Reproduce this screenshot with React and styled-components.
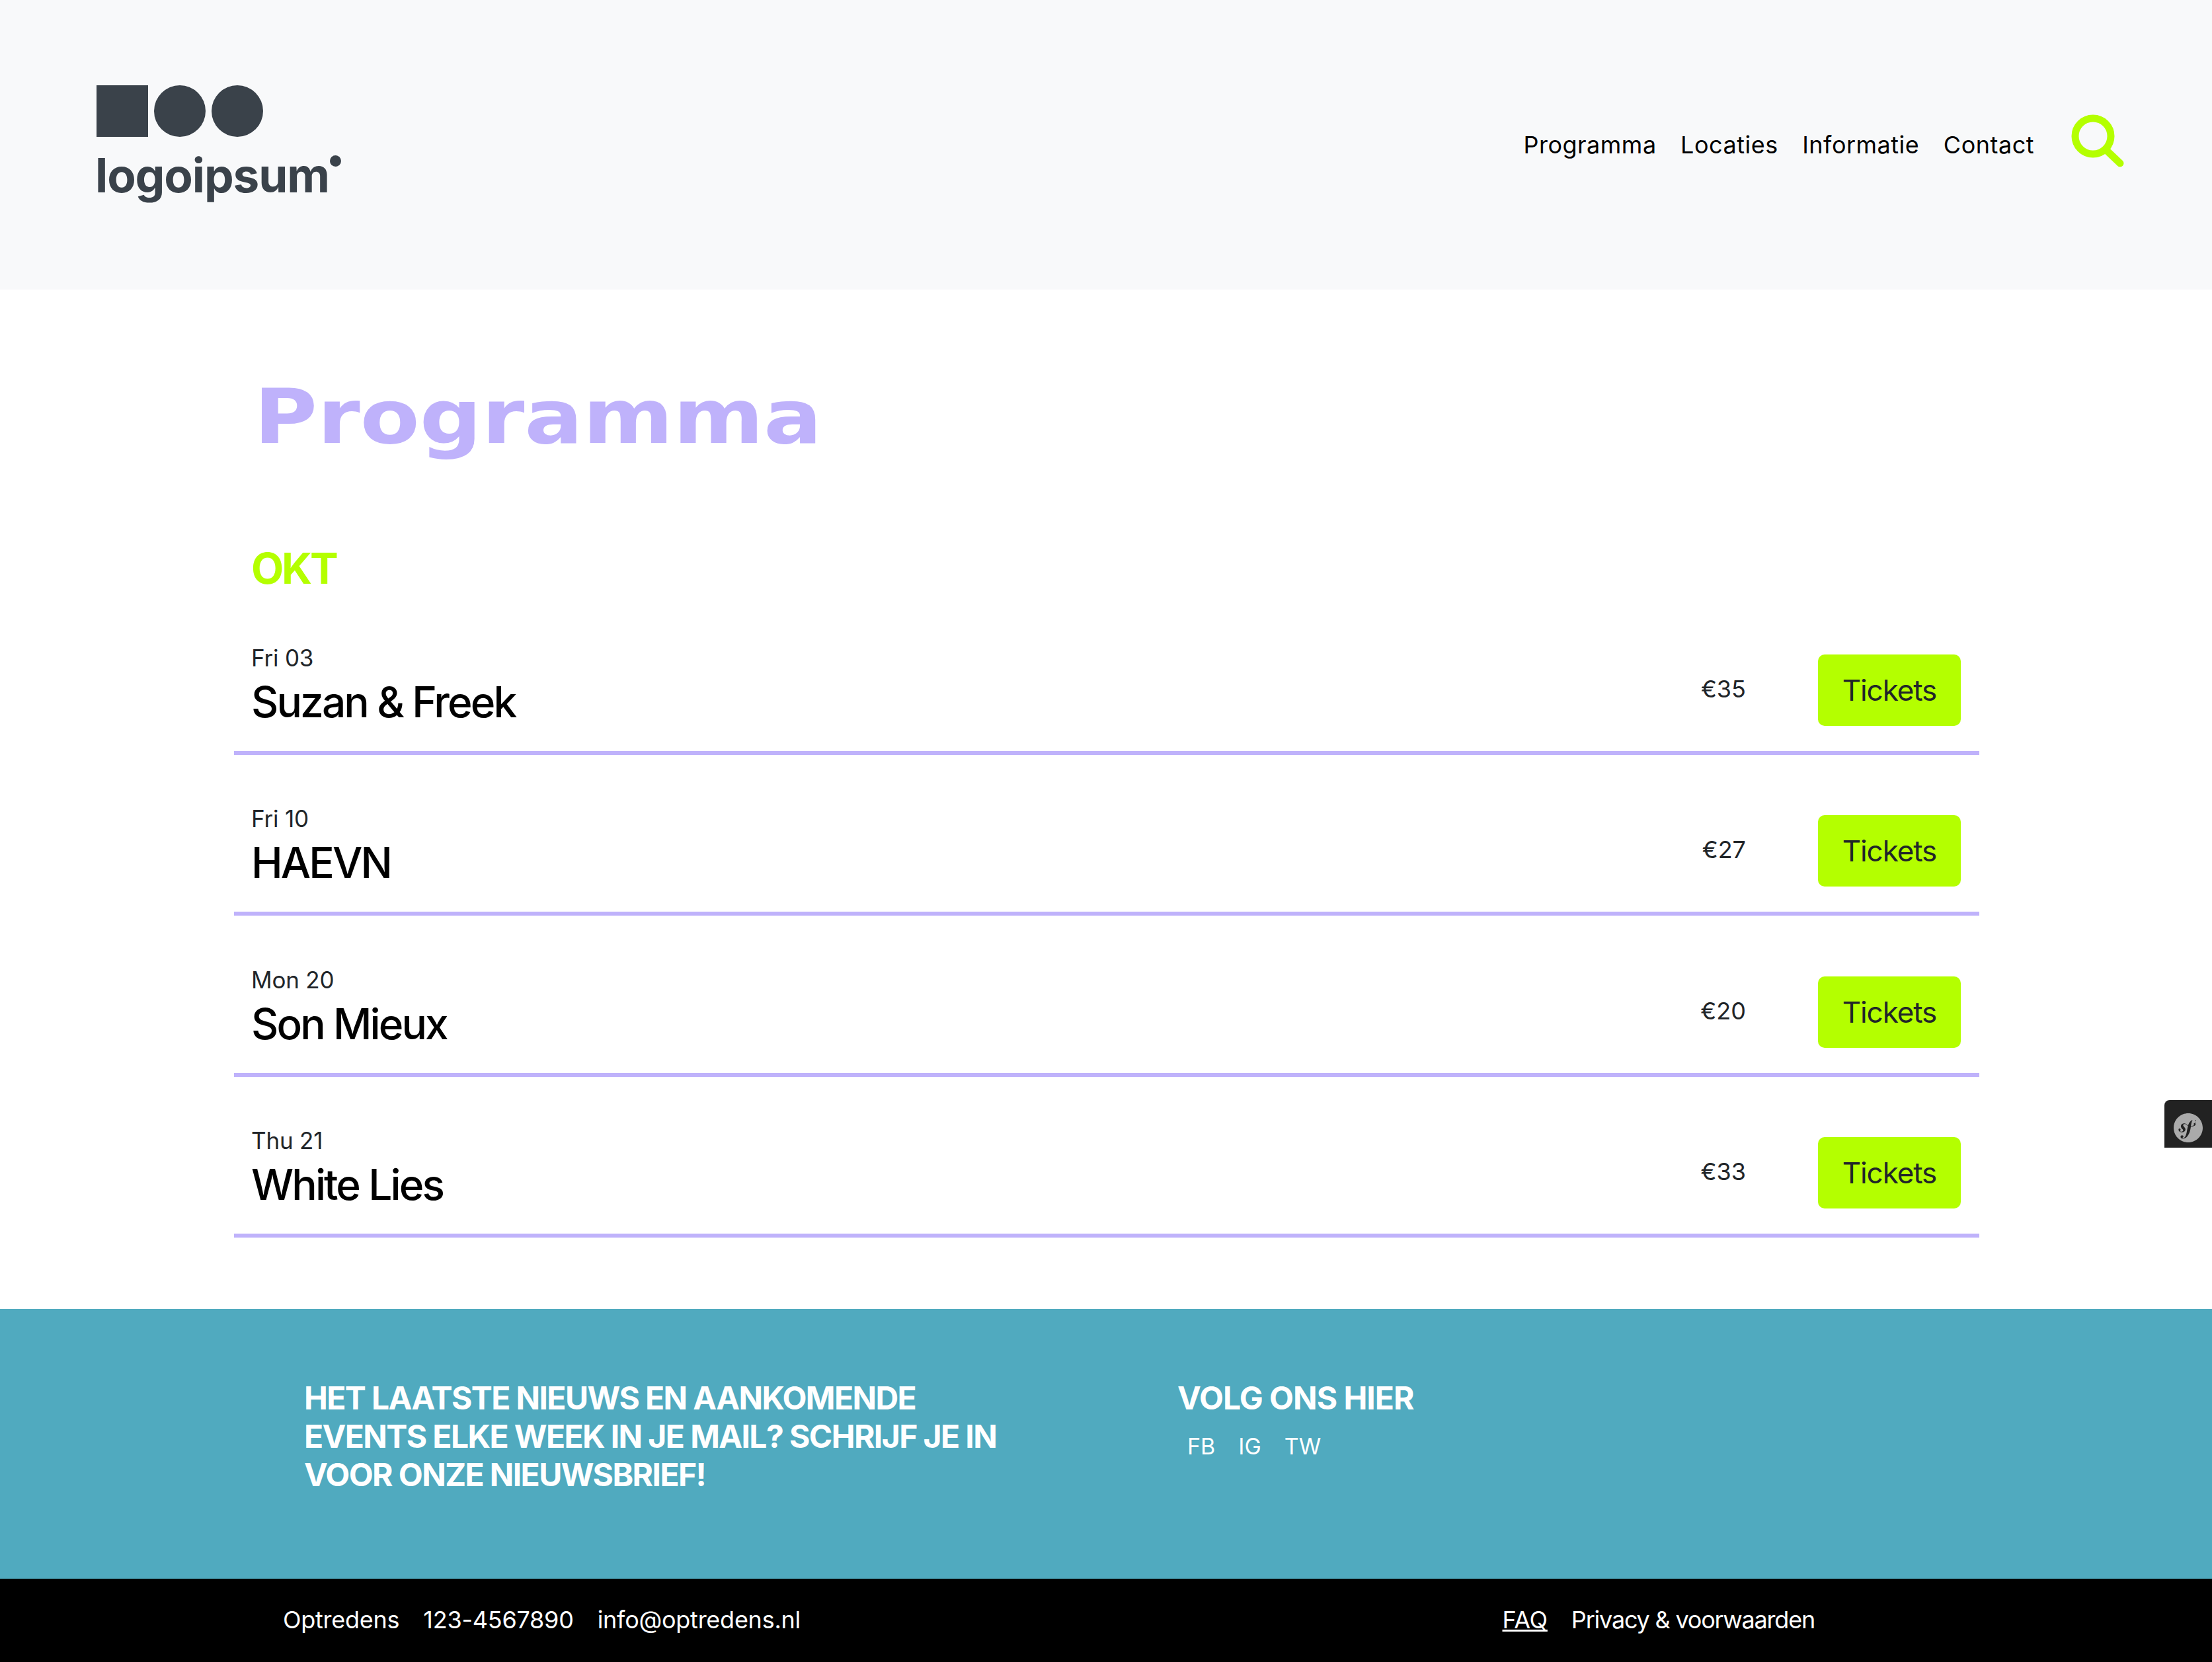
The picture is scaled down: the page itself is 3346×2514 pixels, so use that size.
import styled, { createGlobalStyle } from 'styled-components'

const GlobalStyle = createGlobalStyle`
  html, body {
    margin: 0;
    padding: 0;
    background: #fff;
    font-family: Inter, "Liberation Sans", sans-serif;
    color: #000;
  }
  * { box-sizing: border-box; }
`

const Page = styled.div`
  position: relative;
  width: 3346px;
  height: 2514px;
  overflow: hidden;
`
const Header = styled.header`
  height: 438px;
  background: #f8f9fa;
  padding: 129px 133px 0 146px;
  display: flex;
  justify-content: space-between;
  align-items: flex-start;
`
const Logo = styled.div`
  display: flex;
  flex-direction: column;
  color: #3a424a;
`
const LogoShapes = styled.svg`
  display: block;
  width: 252px;
  height: 78px;
`
const LogoWord = styled.div`
  display: flex;
  align-items: flex-start;
  margin: 20px 0 0 -2px;
  font-size: 71px;
  font-weight: 700;
  line-height: 76px;
  letter-spacing: -1.1px;
`
const LogoDot = styled.span`
  width: 17px;
  height: 17px;
  margin-top: 8px;
  margin-left: 1px;
  border-radius: 50%;
  background: #3a424a;
`
const Nav = styled.nav`
  display: flex;
  align-items: center;
  margin-top: 56px;
`
const NavLink = styled.a`
  font-size: 36px;
  line-height: 44px;
  letter-spacing: 0.5px;
  margin-right: 36.5px;
  color: #000;
`
const SearchIcon = styled.svg`
  width: 80px;
  height: 80px;
  margin-left: 19.5px;
  margin-top: -12px;
  display: block;
`
const Main = styled.main`
  height: 1542px;
  padding: 128px 352px 0 354px;
`
const Title = styled.h1`
  margin: 0 0 0 30px;
  font-family: "DejaVu Sans", sans-serif;
  font-weight: 700;
  font-size: 114px;
  line-height: 130px;
  transform: scaleX(1.15);
  transform-origin: left center;
  color: #bfb2fb;
`
const Month = styled.h2`
  margin: 126px 0 0 26px;
  font-size: 64px;
  line-height: 76px;
  font-weight: 700;
  letter-spacing: -3.2px;
  color: #b4ff00;
`
const Row = styled.div`
  height: 243.6px;
  padding: 0 28px 38px 26px;
  border-bottom: 6px solid #bfb2fb;
  display: flex;
  align-items: flex-end;
`
const RowText = styled.div`
  flex: 1;
  display: flex;
  flex-direction: column;
`
const RowDate = styled.div`
  font-size: 35px;
  line-height: 42px;
  letter-spacing: -0.2px;
  color: #212529;
`
const RowName = styled.div`
  font-size: 64px;
  line-height: 76px;
  font-weight: 500;
  letter-spacing: -2.9px;
  margin-top: 8px;
  margin-bottom: -2px;
`
const Price = styled.div`
  font-size: 36px;
  line-height: 44px;
  color: #212529;
  margin-right: 109px;
  margin-bottom: 34px;
`
const TicketButton = styled.a`
  width: 216px;
  height: 108px;
  border-radius: 10px;
  background: #b4ff00;
  color: #212529;
  font-size: 44px;
  letter-spacing: -1.1px;
  display: flex;
  align-items: center;
  justify-content: center;
`
const Newsletter = styled.section`
  height: 408px;
  background: #50aabf;
  padding: 106px 0 0 460px;
  display: flex;
  color: #fff;
`
const NewsText = styled.div`
  width: 1321px;
  font-size: 48px;
  line-height: 58px;
  font-weight: 700;
  letter-spacing: -1.6px;
`
const Follow = styled.div`
  display: flex;
  flex-direction: column;
`
const FollowTitle = styled.div`
  font-size: 48px;
  line-height: 58px;
  font-weight: 700;
  letter-spacing: -1px;
`
const SocialRow = styled.div`
  display: flex;
  gap: 35px;
  margin: 22px 0 0 15px;
  font-size: 34px;
  line-height: 44px;
`
const BottomBar = styled.footer`
  height: 126px;
  background: #000;
  color: #fff;
  padding: 0 601px 0 428px;
  display: flex;
  justify-content: space-between;
  align-items: center;
  font-size: 36px;
`
const BottomGroup = styled.div`
  display: flex;
  gap: 36px;
  margin-top: -2px;
`
const BottomLink = styled.a`
  color: #fff;
  letter-spacing: ${({ $tight }) => ($tight ? '-1.2px' : '-0.25px')};
  text-decoration: ${({ $underline }) => ($underline ? 'underline' : 'none')};
`
const DebugBadge = styled.div`
  position: absolute;
  right: 0;
  top: 1664px;
  width: 72px;
  height: 72px;
  background: #222;
  border-top-left-radius: 8px;
  display: flex;
  align-items: center;
  justify-content: center;
`
const DebugIcon = styled.svg`
  width: 44px;
  height: 44px;
  display: block;
  margin-top: 12px;
`

const shows = [
  { date: 'Fri 03', name: 'Suzan & Freek', price: '€35' },
  { date: 'Fri 10', name: 'HAEVN', price: '€27' },
  { date: 'Mon 20', name: 'Son Mieux', price: '€20' },
  { date: 'Thu 21', name: 'White Lies', price: '€33' },
]

export default function App() {
  return (
    <Page>
      <GlobalStyle />
      <Header>
        <Logo>
          <LogoShapes viewBox="0 0 252 78">
            <rect width="78" height="78" fill="#3a424a" />
            <circle cx="126" cy="39" r="39" fill="#3a424a" />
            <circle cx="213" cy="39" r="39" fill="#3a424a" />
          </LogoShapes>
          <LogoWord>logoipsum<LogoDot /></LogoWord>
        </Logo>
        <Nav>
          <NavLink>Programma</NavLink>
          <NavLink>Locaties</NavLink>
          <NavLink>Informatie</NavLink>
          <NavLink>Contact</NavLink>
          <SearchIcon viewBox="0 0 80 80">
            <circle cx="33" cy="33" r="27" fill="none" stroke="#b4ff00" strokeWidth="11" />
            <line x1="54" y1="55" x2="74" y2="74" stroke="#b4ff00" strokeWidth="11" strokeLinecap="round" />
          </SearchIcon>
        </Nav>
      </Header>
      <Main>
        <Title>Programma</Title>
        <Month>OKT</Month>
        {shows.map((show) => (
          <Row key={show.name}>
            <RowText>
              <RowDate>{show.date}</RowDate>
              <RowName>{show.name}</RowName>
            </RowText>
            <Price>{show.price}</Price>
            <TicketButton>Tickets</TicketButton>
          </Row>
        ))}
      </Main>
      <Newsletter>
        <NewsText>
          HET LAATSTE NIEUWS EN AANKOMENDE<br />
          EVENTS ELKE WEEK IN JE MAIL? SCHRIJF JE IN<br />
          VOOR ONZE NIEUWSBRIEF!
        </NewsText>
        <Follow>
          <FollowTitle>VOLG ONS HIER</FollowTitle>
          <SocialRow>
            <span>FB</span>
            <span>IG</span>
            <span>TW</span>
          </SocialRow>
        </Follow>
      </Newsletter>
      <BottomBar>
        <BottomGroup>
          <BottomLink>Optredens</BottomLink>
          <BottomLink>123-4567890</BottomLink>
          <BottomLink>info@optredens.nl</BottomLink>
        </BottomGroup>
        <BottomGroup>
          <BottomLink $underline>FAQ</BottomLink>
          <BottomLink $tight>Privacy &amp; voorwaarden</BottomLink>
        </BottomGroup>
      </BottomBar>
      <DebugBadge>
        <DebugIcon viewBox="0 0 24 24">
          <path fill="#aaa" d="M12 0C5.373 0 0 5.373 0 12s5.373 12 12 12 12-5.373 12-12S18.627 0 12 0zm6.72 6.58c-.63.02-1.06-.32-1.08-.85-.01-.19.04-.35.17-.56.13-.24.15-.27.15-.38-.01-.34-.52-.35-.66-.34-1.92.06-2.42 2.65-2.83 4.76l-.2 1.11c1.1.16 1.89-.04 2.33-.32.62-.4-.17-.81-.07-1.26.1-.46.52-.68.85-.69.46-.01.79.47.78.95-.02.8-1.08 1.9-3.19 1.86-.26-.01-.49-.03-.71-.05l-.4 2.2c-.36 1.66-.83 3.94-2.51 5.91-1.45 1.72-2.91 1.99-3.57 2.01-1.23.04-2.05-.61-2.08-1.49-.03-.85.72-1.32 1.22-1.33.66-.02 1.12.46 1.14 1.01.02.47-.23.61-.39.7-.11.09-.27.18-.26.37 0 .08.09.26.35.25.5-.02.83-.27 1.06-.43 1.14-.95 1.58-2.6 2.16-5.6l.12-.73c.2-.98.41-2.07.74-3.17-.8-.6-1.27-1.34-2.33-1.63-.73-.2-1.17-.03-1.48.36-.37.46-.25 1.07.11 1.43l.59.65c.72.83 1.11 1.48.96 2.35-.23 1.39-1.89 2.46-3.84 1.86-1.67-.51-1.98-1.7-1.78-2.35.18-.57.63-.68 1.08-.54.48.15.67.74.53 1.19-.01.05-.04.13-.09.24-.05.13-.15.23-.19.36-.11.35.37.6.7.7.75.23 1.48-.16 1.66-.76.17-.55-.18-.93-.32-1.08l-.7-.75c-.32-.36-1.03-1.36-.69-2.48.13-.43.41-.89.81-1.19.84-.63 1.76-.73 2.63-.48 1.13.32 1.67 1.07 2.38 1.65.4-1.16.94-2.3 1.76-3.25.74-.87 1.74-1.5 2.88-1.54 1.14-.04 2 .48 2.03 1.38.01.36-.2 1.07-.93 1.09z" />
        </DebugIcon>
      </DebugBadge>
    </Page>
  )
}
